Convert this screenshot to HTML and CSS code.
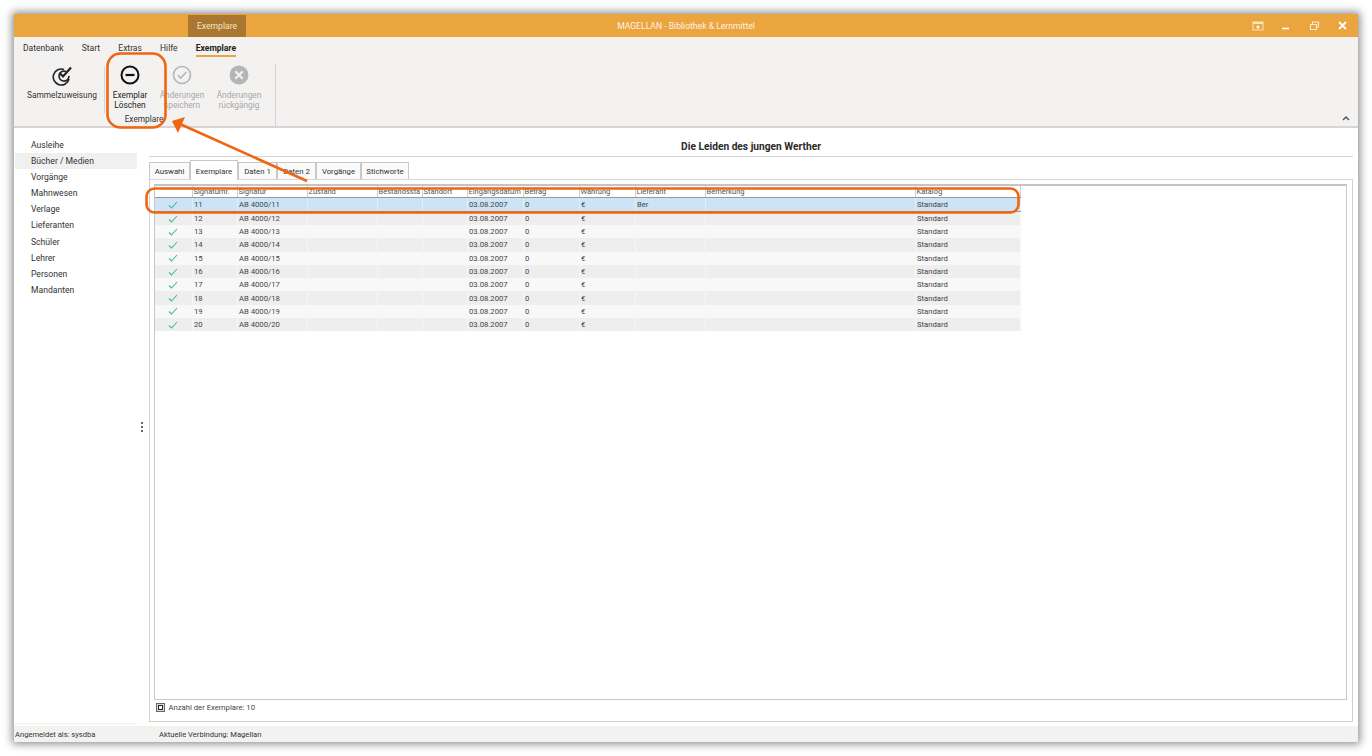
FILE: index.html
```html
<!DOCTYPE html>
<html lang="de">
<head>
    <meta charset="UTF-8">
    <title>MAGELLAN - Bibliothek &amp; Lernmittel</title>
    <link rel="stylesheet" href="styles.css">
</head>
<body>
    <div class="window">
        <div class="titlebar">
            <div class="context-tab">Exemplare</div>
            <div class="app-title">MAGELLAN - Bibliothek &amp; Lernmittel</div>
            <div class="win-buttons">
                <svg width="12" height="10" viewBox="0 0 12 10"><rect x="1" y="1" width="10" height="8" fill="none" stroke="#fbe3bf" stroke-width="1"/><rect x="1" y="1" width="10" height="2" fill="#fbe3bf"/><path d="M6 4v4M4 6h4" stroke="#fff" stroke-width="1"/></svg>
                <svg width="12" height="10" viewBox="0 0 12 10"><path d="M2 7.5h7" stroke="#fff" stroke-width="1.6"/></svg>
                <svg width="12" height="10" viewBox="0 0 12 10"><path d="M3.5 3V1h6v5H8M1.5 3.5h6v5h-6z" fill="none" stroke="#fbe9cf" stroke-width="1.2"/></svg>
                <svg width="12" height="10" viewBox="0 0 12 10"><path d="M2 1l7 7M9 1L2 8" stroke="#fff" stroke-width="1.8"/></svg>
            </div>
        </div>

        <div class="ribbon">
            <ul class="menu">
                <li>Datenbank</li>
                <li>Start</li>
                <li>Extras</li>
                <li>Hilfe</li>
                <li class="active">Exemplare</li>
            </ul>
            <div class="tools">
                <div class="tool tool-first">
                    <svg width="24" height="22" viewBox="0 0 24 22">
                        <path d="M15 4.5A8 8 0 1 0 20 14" fill="none" stroke="#222" stroke-width="1.6" transform="translate(-1 1)"/>
                        <path d="M16 7.5A5 5 0 1 0 19 12" fill="none" stroke="#222" stroke-width="1.6"/>
                        <path d="M9.5 9l3.5 3.5L21 3.5" fill="none" stroke="#222" stroke-width="2.2"/>
                    </svg>
                    <span>Sammelzuweisung</span>
                </div>
                <div class="tool-sep short"></div>
                <div class="tool-group">
                    <div class="group-items">
                        <div class="tool tool-delete">
                            <svg width="22" height="22" viewBox="0 0 22 22"><circle cx="11" cy="11" r="8.5" fill="none" stroke="#111" stroke-width="2"/><path d="M6.5 11h9" stroke="#111" stroke-width="2.2"/></svg>
                            <span>Exemplar<br>Löschen</span>
                        </div>
                        <div class="tool tool-save disabled">
                            <svg width="22" height="22" viewBox="0 0 22 22"><circle cx="11" cy="11" r="8.5" fill="none" stroke="#b5b5b5" stroke-width="1.6"/><path d="M6.8 11l3 3 5.5-6" fill="none" stroke="#b5b5b5" stroke-width="1.6"/></svg>
                            <span>Änderungen<br>speichern</span>
                        </div>
                        <div class="tool tool-undo disabled">
                            <svg width="22" height="22" viewBox="0 0 22 22"><circle cx="11" cy="11" r="9.5" fill="#b5b5b5"/><path d="M7.3 7.3l7.4 7.4M14.7 7.3l-7.4 7.4" stroke="#f3f2f1" stroke-width="2.2"/></svg>
                            <span>Änderungen<br>rückgängig</span>
                        </div>
                    </div>
                    <div class="group-label">Exemplare</div>
                </div>
                <div class="tool-sep"></div>
            </div>
            <svg class="collapse" width="8" height="6" viewBox="0 0 8 6"><path d="M1 5l3-3 3 3" fill="none" stroke="#555" stroke-width="1.5"/></svg>
        </div>

        <div class="main">
            <div class="sidebar">
                <ul class="nav">
                    <li>Ausleihe</li>
                    <li class="selected">Bücher / Medien</li>
                    <li>Vorgänge</li>
                    <li>Mahnwesen</li>
                    <li>Verlage</li>
                    <li>Lieferanten</li>
                    <li>Schüler</li>
                    <li>Lehrer</li>
                    <li>Personen</li>
                    <li>Mandanten</li>
                </ul>
            </div>
            <div class="splitter"><span></span><span></span><span></span></div>
            <div class="content">
                <div class="book-title">Die Leiden des jungen Werther</div>
                <div class="tabs">
                    <div class="tab t-aus">Auswahl</div>
                    <div class="tab current t-exe">Exemplare</div>
                    <div class="tab t-da1">Daten 1</div>
                    <div class="tab t-da2">Daten 2</div>
                    <div class="tab t-vor">Vorgänge</div>
                    <div class="tab t-sti">Stichworte</div>
                </div>
                <div class="tab-pane">
                    <div class="grid-box">
                        <table class="grid">
                            <colgroup>
                                <col class="c-ind"><col class="c-nr"><col class="c-sig"><col class="c-zus"><col class="c-bes"><col class="c-sta"><col class="c-ein"><col class="c-bet"><col class="c-wae"><col class="c-lie"><col class="c-bem"><col class="c-kat">
                            </colgroup>
                            <thead>
                                <tr><th></th><th>Signaturnr.</th><th>Signatur</th><th>Zustand</th><th>Bestandssta</th><th>Standort</th><th>Eingangsdatum</th><th>Betrag</th><th>Währung</th><th>Lieferant</th><th>Bemerkung</th><th>Katalog</th></tr>
                            </thead>
                            <tbody id="rows"></tbody>
                        </table>
                    </div>
                    <div class="grid-footer">
                        <svg width="9" height="9" viewBox="0 0 9 9"><rect x="0.5" y="0.5" width="8" height="8" fill="#ddd" stroke="#666"/><rect x="2.5" y="2.5" width="4" height="4" fill="#fff" stroke="#222"/></svg>
                        <span>Anzahl der Exemplare: 10</span>
                    </div>
                </div>
            </div>
        </div>

        <div class="statusbar">
            <div class="status-user">Angemeldet als: sysdba</div>
            <div>Aktuelle Verbindung: Magellan</div>
        </div>
    </div>

    <!-- Markierungen aus dem Screenshot -->
    <svg class="marks" width="1372" height="756" viewBox="0 0 1372 756">
        <rect x="107.5" y="53.5" width="58" height="74" rx="13" fill="none" stroke="#f0650f" stroke-width="2.6"/>
        <rect x="146.5" y="188.5" width="872" height="24" rx="8" fill="none" stroke="#f0650f" stroke-width="2.6"/>
        <path d="M307 181L180 124" stroke="#f0650f" stroke-width="2.6"/>
        <path d="M172 121l13-4-7 16z" fill="#f0650f"/>
    </svg>

    <script>
        const rows = document.getElementById('rows');
        for (let i = 11; i <= 20; i++) {
            const tr = document.createElement('tr');
            if (i === 11) tr.className = 'picked';
            const check = '<svg width="10" height="8" viewBox="0 0 10 8"><path d="M1 4.5l2.5 2.5L9 1" fill="none" stroke="#3fbf8f" stroke-width="1.1"/></svg>';
            const supplier = i === 11 ? 'Ber' : '';
            tr.innerHTML = `<td class="ind">${check}</td><td>${i}</td><td>AB 4000/${i}</td><td></td><td></td><td></td><td>03.08.2007</td><td>0</td><td>€</td><td>${supplier}</td><td></td><td>Standard</td>`;
            rows.appendChild(tr);
        }
    </script>
</body>
</html>
```

FILE: styles.css
```css
html, body {
    height: 100%;
}
body {
    margin: 0;
    padding: 14px;
    box-sizing: border-box;
    background-color: #fff;
    font-family: Roboto, "Open Sans", sans-serif;
    font-size: 8.6px;
    color: #333;
    overflow: hidden;
}
.window {
    height: 728px;
    display: flex;
    flex-direction: column;
    background-color: #fff;
    box-shadow: 0 0 8px 2px rgba(0, 0, 0, 0.45);
}

/* Titelleiste */
.titlebar {
    height: 23px;
    flex: none;
    display: flex;
    align-items: stretch;
    position: relative;
    background-color: #eaa53f;
    color: #fdf3e3;
}
.context-tab {
    margin-left: 174px;
    width: 58px;
    margin-top: 1px;
    display: flex;
    align-items: center;
    justify-content: center;
    background-color: #a9772f;
    color: #f4e3c8;
}
.app-title {
    position: absolute;
    left: 0;
    right: 0;
    top: 0;
    bottom: 0;
    display: flex;
    align-items: center;
    justify-content: center;
}
.win-buttons {
    margin-left: auto;
    display: flex;
    align-items: center;
    gap: 16.5px;
    padding-right: 9px;
    position: relative;
}

/* Ribbon */
.ribbon {
    height: 89px;
    flex: none;
    position: relative;
    background-color: #f3f2f1;
    border-bottom: 2px solid #d6d6d6;
}
.menu {
    list-style: none;
    margin: 0;
    padding: 5px 0 0 9px;
    display: flex;
    gap: 18.2px;
    height: 15px;
    font-size: 8.5px;
}
.menu li {
    height: 15px;
    line-height: 13px;
    color: #333;
}
.menu li.active {
    font-weight: 700;
    color: #222;
    border-bottom: 2px solid #eaa53f;
    box-sizing: border-box;
}
.tools {
    display: flex;
    align-items: flex-start;
    height: 64px;
    padding-top: 6.5px;
    box-sizing: border-box;
}
.tool {
    display: flex;
    flex-direction: column;
    align-items: center;
    text-align: center;
    line-height: 10px;
    font-size: 8.3px;
}
.tool svg {
    margin-bottom: 4px;
}
.tool-first {
    width: 70px;
    margin-left: 13px;
}
.tool-sep {
    width: 1px;
    height: 62px;
    margin-top: 0;
    background-color: #d4d4d4;
}
.tool-sep.short {
    height: 46px;
    margin: 3px 9px 0 7px;
}
.tool-group {
    width: 161px;
}
.group-items {
    display: flex;
    height: 50px;
}
.tool-delete {
    width: 32px;
    color: #222;
}
.tool-save {
    width: 50px;
    margin-left: 11px;
}
.tool-undo {
    width: 50px;
    margin-left: 7px;
}
.disabled {
    color: #a8a8a8;
}
.group-label {
    width: 60px;
    line-height: 10px;
    text-align: center;
    font-size: 8.3px;
}
.collapse {
    position: absolute;
    right: 8px;
    bottom: 5px;
}

/* Hauptbereich */
.main {
    flex: 1;
    display: flex;
    min-height: 0;
}
.sidebar {
    width: 122px;
    margin-left: 1px;
    height: 595px;
    flex: none;
    border-bottom: 1px solid #eee;
}
.nav {
    list-style: none;
    margin: 0;
    padding: 9px 0 0;
}
.nav li {
    height: 16.1px;
    line-height: 16px;
    padding-left: 16px;
}
.nav li.selected {
    background-color: #f0f0f0;
}
.splitter {
    width: 12px;
    flex: none;
    display: flex;
    flex-direction: column;
    align-items: flex-start;
    justify-content: center;
    gap: 2px;
    padding-left: 4px;
    box-sizing: border-box;
    height: 597px;
}
.splitter span {
    width: 1.5px;
    height: 2px;
    background-color: #666;
}
.content {
    flex: 1;
    display: flex;
    flex-direction: column;
    margin-right: 5px;
    min-width: 0;
}
.book-title {
    height: 29px;
    box-sizing: border-box;
    padding-top: 12px;
    line-height: 13px;
    text-align: center;
    font-weight: 700;
    font-size: 10.2px;
    color: #2a2a2a;
    border-bottom: 1px solid #d4d4d4;
}
.tabs {
    display: flex;
    height: 22px;
    box-sizing: border-box;
    align-items: flex-end;
    font-size: 7.8px;
}
.tab {
    height: 17px;
    line-height: 17px;
    border: 1px solid #c8c8c8;
    border-bottom: 0;
    background-color: #fafafa;
    box-sizing: border-box;
    text-align: center;
    position: relative;
}
.tab.current {
    height: 20px;
    line-height: 21px;
    top: 1px;
    background-color: #fff;
    z-index: 1;
}
.t-aus { width: 41px; }
.t-exe { width: 48px; }
.t-da1 { width: 39px; }
.t-da2 { width: 39px; }
.t-vor { width: 45px; }
.t-sti { width: 48px; }
.tab-pane {
    height: 543px;
    box-sizing: border-box;
    border: 1px solid #d0d0d0;
    border-top: 1px solid #d8d8d8;
    padding: 4px 5px 0 4px;
}
.grid-box {
    height: 516px;
    box-sizing: border-box;
    border: 1px solid #c8c8c8;
    border-top: 2px solid #c4c4c4;
    overflow: hidden;
}

/* Tabelle */
.grid {
    border-collapse: collapse;
    table-layout: fixed;
    width: 865px;
    line-height: 13px;
    font-size: 7.7px;
}
.c-ind { width: 37px; }
.c-nr { width: 45px; }
.c-sig { width: 70px; }
.c-zus { width: 70px; }
.c-bes { width: 45px; }
.c-sta { width: 45px; }
.c-ein { width: 56px; }
.c-bet { width: 56px; }
.c-wae { width: 56px; }
.c-lie { width: 70px; }
.c-bem { width: 210px; }
.c-kat { width: 105px; }
.grid th {
    height: 11px;
    padding: 0 0 0 1px;
    font-size: 7.5px;
    font-weight: 400;
    text-align: left;
    color: #555;
    white-space: nowrap;
    overflow: hidden;
    background-color: #fff;
    border-right: 1px solid #d0d0d0;
    border-bottom: 1px solid #999;
    line-height: 10px;
}
.grid td {
    height: 13.3px;
    padding: 0 0 0 1.5px;
    border-right: 1px solid #f6f6f6;
    white-space: nowrap;
    overflow: hidden;
    box-sizing: border-box;
    background-color: #fff;
    color: #444;
}
.grid tbody tr:nth-child(even) td {
    background-color: #eeeeee;
}
.grid tbody tr:nth-child(odd) td {
    background-color: #f8f8f8;
}
.grid tbody tr.picked td {
    background-color: #cce4f6;
    border-bottom: 1px solid #9a9a9a;
    border-right-color: #dfeefa;
}
.grid td.ind {
    text-align: center;
    padding: 0;
}
.grid td.ind svg {
    display: block;
    margin: 0 auto;
}
.grid-footer {
    display: flex;
    align-items: center;
    gap: 3.5px;
    height: 14px;
    padding-left: 2px;
    color: #444;
    font-size: 7.7px;
}

/* Statuszeile */
.statusbar {
    height: 16px;
    flex: none;
    display: flex;
    align-items: center;
    background-color: #f3f2f1;
    color: #333;
    font-size: 7.6px;
}
.status-user {
    width: 145px;
    padding-left: 1px;
    box-sizing: border-box;
}

.marks {
    position: absolute;
    left: 0;
    top: 0;
    pointer-events: none;
}
```
